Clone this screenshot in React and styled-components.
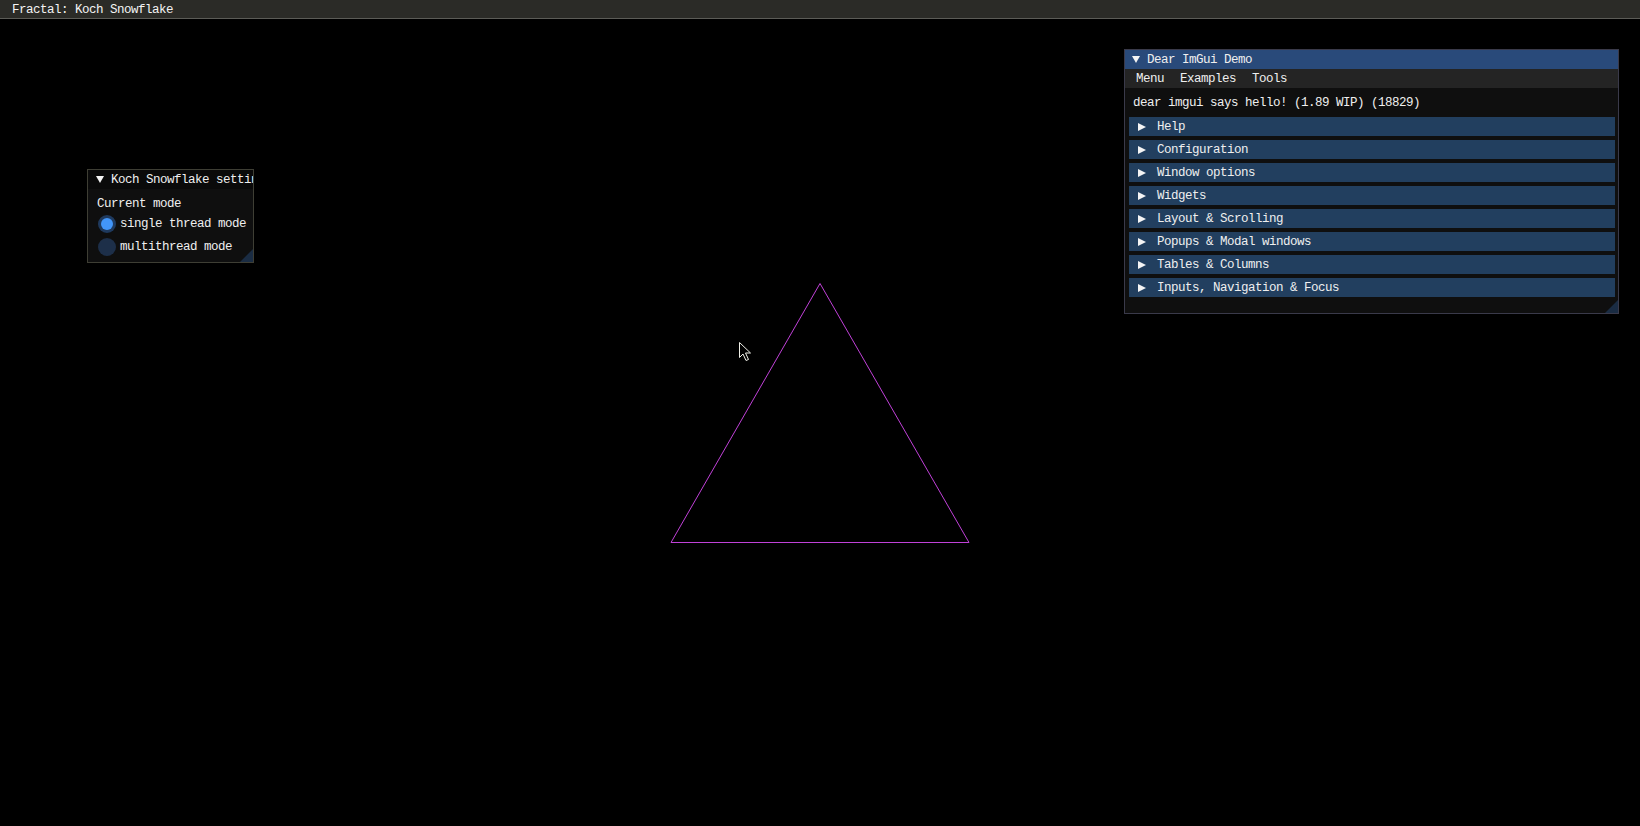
import React from 'react';
import styled, { createGlobalStyle } from 'styled-components';

const Global = createGlobalStyle`
  html, body { margin: 0; padding: 0; background: #000; }
  #root { width: 1640px; height: 826px; }
`;

const Screen = styled.div`
  width: 1640px;
  height: 826px;
  display: flex;
  flex-direction: column;
  background: #000;
  overflow: hidden;
  font-family: "Liberation Mono", "DejaVu Sans Mono", monospace;
  font-size: 12.5px;
  letter-spacing: -0.5px;
  line-height: 13px;
  color: #efefef;
`;

const OsTitle = styled.header`
  flex: none;
  height: 18px;
  box-sizing: border-box;
  padding-top: 3px;
  border-bottom: 1px solid #5c5c57;
  background: #2b2b27;
  display: flex;
  align-items: center;
  padding-left: 12px;
  color: #f4f4f4;
  & { height: 19px; }
`;

const Canvas = styled.main`
  flex: 1;
  position: relative;
`;

const Viewport = styled.svg`
  position: absolute;
  left: 0;
  top: 0;
`;

const Win = styled.section`
  position: absolute;
  left: ${(p) => p.$x}px;
  top: ${(p) => p.$y}px;
  width: ${(p) => p.$w}px;
  height: ${(p) => p.$h}px;
  box-sizing: border-box;
  border: 1px solid ${(p) => p.$border};
  background: #0f0f0f;
  display: flex;
  flex-direction: column;
  overflow: hidden;
`;

const TitleBar = styled.div`
  flex: none;
  height: 19px;
  box-sizing: border-box;
  padding-top: 2px;
  display: flex;
  align-items: center;
  gap: 7px;
  padding-left: ${(p) => p.$pad}px;
  background: ${(p) => (p.$active ? '#294a7a' : '#0a0a0a')};
  white-space: nowrap;
  overflow: hidden;
`;

const DownArrow = styled.span`
  flex: none;
  width: 0;
  height: 0;
  margin-top: -2px;
  border-left: 4px solid transparent;
  border-right: 4px solid transparent;
  border-top: 7px solid #f4f4f4;
`;

const RightArrow = styled.span`
  flex: none;
  width: 0;
  height: 0;
  margin-top: -2px;
  border-top: 4.5px solid transparent;
  border-bottom: 4.5px solid transparent;
  border-left: 8px solid #f4f4f4;
`;

const MenuBar = styled.nav`
  flex: none;
  height: 19px;
  box-sizing: border-box;
  padding-top: 2px;
  display: flex;
  align-items: center;
  gap: 16px;
  padding-left: 11px;
  background: #242424;
`;

const Content = styled.div`
  flex: 1;
  display: flex;
  flex-direction: column;
  padding: ${(p) => p.$pad};
`;

const Line = styled.div`
  height: 13px;
  padding-top: 1px;
  margin-left: ${(p) => p.$indent || 0}px;
  white-space: nowrap;
`;

const HeaderList = styled.div`
  display: flex;
  flex-direction: column;
  gap: 4px;
  margin-top: 7px;
`;

const Header = styled.div`
  height: 19px;
  box-sizing: border-box;
  padding-top: 2px;
  display: flex;
  align-items: center;
  gap: 11px;
  padding-left: 9px;
  background: #223f5f;
  white-space: nowrap;
`;

const RadioList = styled.div`
  display: flex;
  flex-direction: column;
  gap: 4px;
  margin-top: 3px;
`;

const RadioRow = styled.label`
  height: 19px;
  display: flex;
  align-items: center;
  gap: 4px;
  white-space: nowrap;
`;

const RadioLabel = styled.span`
  padding-top: 2px;
`;

const RadioBox = styled.span`
  flex: none;
  position: relative;
  width: 19px;
  height: 19px;
  display: flex;
  align-items: center;
  justify-content: center;
  &::before {
    content: '';
    width: 18px;
    height: 18px;
    border-radius: 50%;
    background: ${(p) => (p.$on ? '#1f3a5e' : '#1d2f49')};
  }
`;

const RadioDot = styled.span`
  position: absolute;
  left: 3.5px;
  top: 3.5px;
  width: 12px;
  height: 12px;
  border-radius: 50%;
  background: #4296fa;
`;

const Grip = styled.span`
  position: absolute;
  right: 0;
  bottom: 0;
  width: ${(p) => p.$size}px;
  height: ${(p) => p.$size}px;
  background: #1a2c43;
  clip-path: polygon(100% 0, 100% 100%, 0 100%);
`;

const headers = [
  'Help',
  'Configuration',
  'Window options',
  'Widgets',
  'Layout & Scrolling',
  'Popups & Modal windows',
  'Tables & Columns',
  'Inputs, Navigation & Focus',
];

function Radio({ on, children }) {
  return (
    <RadioRow>
      <RadioBox $on={on}>{on && <RadioDot />}</RadioBox>
      <RadioLabel>{children}</RadioLabel>
    </RadioRow>
  );
}

export default function App() {
  return (
    <>
      <Global />
      <Screen>
        <OsTitle>Fractal: Koch Snowflake</OsTitle>
        <Canvas>
          <Viewport width="1640" height="807" viewBox="0 19 1640 807">
            <polygon
              points="820,283.5 671,542.5 969,542.5"
              fill="none"
              stroke="#c041d8"
              strokeWidth="1"
            />
            <path
              d="M739.5 342.5 L739.5 357.5 L743 354 L746 360.5 L748.5 359.5 L745.5 353 L750.5 353 Z"
              fill="#000"
              stroke="#f0f0e8"
              strokeWidth="1"
            />
          </Viewport>

          <Win $x={87} $y={150} $w={167} $h={94} $border="#3e3e34">
            <TitleBar $pad={8}>
              <DownArrow />
              Koch Snowflake settings
            </TitleBar>
            <Content $pad="8px 8px 0 9px">
              <Line>Current mode</Line>
              <RadioList>
                <Radio on>single thread mode</Radio>
                <Radio>multithread mode</Radio>
              </RadioList>
            </Content>
            <Grip $size={13} />
          </Win>

          <Win $x={1124} $y={30} $w={495} $h={265} $border="#3a3a4a">
            <TitleBar $pad={7} $active>
              <DownArrow />
              Dear ImGui Demo
            </TitleBar>
            <MenuBar>
              <span>Menu</span>
              <span>Examples</span>
              <span>Tools</span>
            </MenuBar>
            <Content $pad="8px 3px 0 4px">
              <Line $indent={4}>dear imgui says hello! (1.89 WIP) (18829)</Line>
              <HeaderList>
                {headers.map((h) => (
                  <Header key={h}>
                    <RightArrow />
                    {h}
                  </Header>
                ))}
              </HeaderList>
            </Content>
            <Grip $size={13} />
          </Win>
        </Canvas>
      </Screen>
    </>
  );
}
